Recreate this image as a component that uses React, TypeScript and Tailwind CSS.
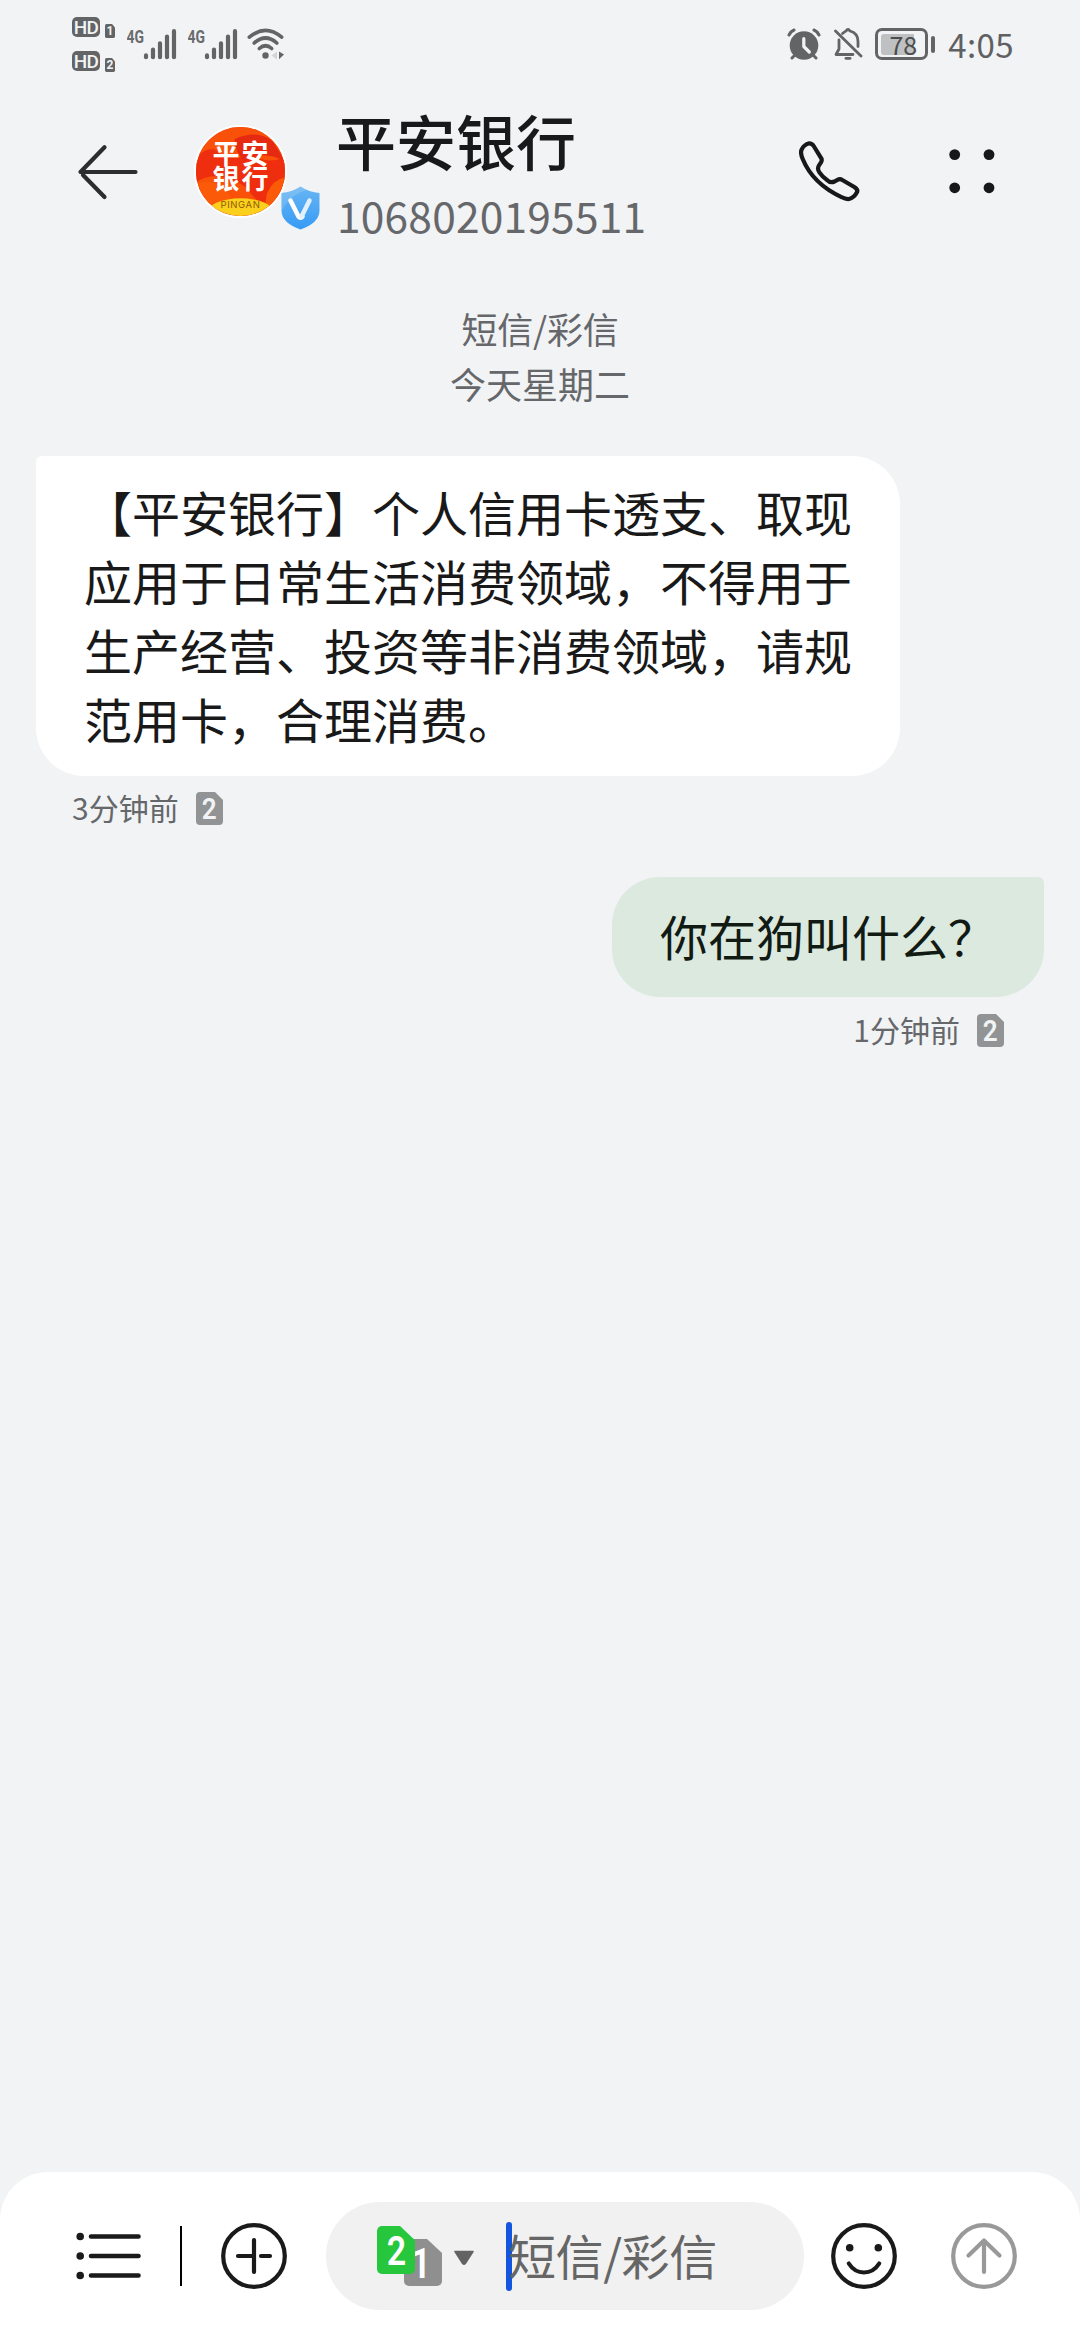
import React from "react";

const cjk = "font-['Noto_Sans_CJK_SC',sans-serif]";

function Sim({ n, className, textClass }: { n: string; className: string; textClass: string }) {
  return (
    <span className={`relative flex shrink-0 items-center justify-center ${className}`}>
      <svg className="absolute inset-0 h-full w-full" viewBox="0 0 38 47" preserveAspectRatio="none">
        <path d="M5 0H23L38 14V42a5 5 0 0 1-5 5H5a5 5 0 0 1-5-5V5a5 5 0 0 1 5-5z" fill="currentColor" />
      </svg>
      <span className={`relative font-['Roboto',sans-serif] leading-none ${textClass}`}>{n}</span>
    </span>
  );
}

function SmallSim({ n, className, textClass }: { n: string; className: string; textClass: string }) {
  return (
    <span className={`relative flex shrink-0 items-center justify-center ${className}`}>
      <svg className="absolute inset-0 h-full w-full" viewBox="0 0 27 33" preserveAspectRatio="none">
        <path d="M4 0H19L27 8V29a4 4 0 0 1-4 4H4a4 4 0 0 1-4-4V4a4 4 0 0 1 4-4z" fill="currentColor" />
      </svg>
      <span className={`relative font-['Roboto',sans-serif] leading-none ${textClass}`}>{n}</span>
    </span>
  );
}

function Hd({ n }: { n: string }) {
  return (
    <div className="flex h-[20px] items-end gap-[5px]">
      <span className="mb-px flex h-[20px] w-[28px] items-center justify-center rounded-[5px] bg-[#636466] font-['Roboto',sans-serif] text-[19px] leading-none font-medium tracking-[-0.8px] text-[#f1f3f5]">
        HD
      </span>
      <SmallSim n={n} className="h-[14px] w-[10px] text-[#636466]" textClass="text-[12px] font-bold text-[#f1f3f5]" />
    </div>
  );
}

function Signal() {
  return (
    <svg className="h-[32px] w-[50px] shrink-0" viewBox="0 0 50 32">
      <text x="-0.5" y="15" fontFamily="Roboto" fontSize="19" fontWeight="700" fill="#6a6b6d" textLength="17.5" lengthAdjust="spacingAndGlyphs">
        4G
      </text>
      <g stroke="#636466" strokeWidth="4.2" strokeLinecap="round">
        <path d="M19 27.4V29.2M26 21.5V29.2M33 15.3V29.2M40 8.5V29.2M47 3.2V29.2" />
      </g>
    </svg>
  );
}

function Wifi() {
  return (
    <svg className="h-[32px] w-[38px] shrink-0" viewBox="0 0 38 32" fill="none">
      <g stroke="#636466" strokeWidth="3.6" strokeLinecap="round">
        <path d="M2.3 9.2Q18.5-4.500 34.7 9.2" />
        <path d="M7.2 15Q18.5 5 29.8 15" />
        <path d="M12.3 20.5Q18.5 15 24.7 20.5" />
      </g>
      <circle cx="18.5" cy="27.5" r="3.2" fill="#636466" />
      <path d="M30 23.5v8l-5.5-4z" fill="#d3d4d6" />
      <path d="M32 23.5l5 3-5 4.8z" fill="#636466" />
    </svg>
  );
}

function StatusBar() {
  return (
    <div className="flex h-[90px] shrink-0 items-start text-[#636466]">
      <div className="mt-[18px] ml-[72px] flex flex-col gap-[14px]">
        <Hd n="1" />
        <Hd n="2" />
      </div>
      <div className="mt-[28px] ml-[12px] flex gap-[11px]">
        <Signal />
        <Signal />
      </div>
      <div className="mt-[28px] ml-[9px]">
        <Wifi />
      </div>
      <svg className="mt-[28px] ml-auto h-[32px] w-[34px]" viewBox="0 0 34 32" fill="none">
        <circle cx="17" cy="17.5" r="14.3" fill="#636466" />
        <g stroke="#636466" strokeWidth="3" strokeLinecap="round">
          <path d="M2 7q2-3.800 5-5M32 7q-2-3.800-5-5M5 30l4-4M29 30l-4-4" />
        </g>
        <path d="M16.8 10.5v8l5.5 5.5" stroke="#f1f3f5" strokeWidth="3.2" strokeLinecap="round" strokeLinejoin="round" />
      </svg>
      <svg className="mt-[28px] ml-[13px] h-[32px] w-[29px]" viewBox="0 0 29 32" fill="none" stroke="#636466" strokeWidth="2.8" strokeLinecap="round">
        <path d="M1.5 3L27 28" />
        <path d="M5 12v9l-3 5.500H19" strokeLinejoin="round" />
        <path d="M8.500 5.500Q11 3.300 12 3q2-3 4 0 8 2 8 10.500v5" />
        <path d="M12 30.300h4" />
      </svg>
      <div className="mt-[28px] ml-[12px] flex items-center gap-[3px]">
        <div className="flex h-[32px] w-[53px] items-center rounded-[7px] border-[3px] border-[#636466] px-[3px]">
          <div className="relative flex h-[21px] w-[41px] items-center justify-center rounded-[3px] bg-[linear-gradient(90deg,#bfc0c1_80%,transparent_80%)] pl-[3px] font-['Noto_Sans_CJK_SC',sans-serif] text-[25px] leading-none text-[#4c4d4e]">
            78
          </div>
        </div>
        <div className="h-[17px] w-[4px] rounded-[2px] bg-[#636466]" />
      </div>
      <div className={`mt-[20px] mr-[66px] ml-[13px] text-[33px] leading-[48px] tracking-[0.4px] text-[#5f6062] ${cjk}`}>4:05</div>
    </div>
  );
}

function Avatar() {
  return (
    <div className="relative h-[93px] w-[93px]">
      <div className="relative flex h-full w-full flex-col items-center overflow-hidden rounded-full border-[2.5px] border-white bg-[#ec3a0c]">
        <svg className="absolute inset-0 h-full w-full" viewBox="0 0 88 88">
          <rect width="88" height="88" fill="#f9500a" />
          <path d="M0 55Q-4 20 18 22 38 38 52 25 68 38 88 30V70Q70 90 50 60 20 40 0 55z" fill="#ee2e0e" />
          <path d="M38 12Q60 2 76 14L88 34Q66 22 48 34 38 24 38 12z" fill="#e62a12" />
          <path d="M0 56Q25 48 38 76H0zM70 66Q76 52 88 50V80H68z" fill="#fb5a08" />
          <ellipse cx="44" cy="85" rx="33" ry="14.5" fill="#fbd01c" />
        </svg>
        <div className={`relative mt-[13px] text-center text-[27px] leading-[25px] font-bold tracking-[2px] text-white ${cjk}`}>
          <div className="-mr-[2px]">平安</div>
          <div className="-mr-[2px]">银行</div>
        </div>
        <div className="relative mt-[10px] font-['Inter',sans-serif] text-[9.5px] leading-[10px] tracking-[0.6px] text-[#8f5a08]">PINGAN</div>
      </div>
      <svg className="absolute top-[61px] left-[87px] h-[44px] w-[39px]" viewBox="0 0 39 44">
        <defs>
          <linearGradient id="shield" x1="0" y1="0" x2="0" y2="1">
            <stop offset="0" stopColor="#68b5f3" />
            <stop offset="1" stopColor="#369bf6" />
          </linearGradient>
        </defs>
        <path d="M19.5 0.5Q28 6 38.5 7V25Q38 37 19.5 43.5 1 37 .5 25V7Q11 6 19.5 .5z" fill="url(#shield)" />
        <path d="M19.5 .5Q11 6 .5 7V25Q10 8 26 4z" fill="#fff" opacity=".15" />
        <path d="M9.5 14.5L17.5 30.5Q19.5 33 21.5 30.5" stroke="#fff" strokeWidth="4.5" fill="none" strokeLinecap="round" />
        <path d="M20.5 30.5L28.5 14.5" stroke="#e1f0fd" strokeWidth="4.5" fill="none" strokeLinecap="round" />
      </svg>
    </div>
  );
}

function Header() {
  return (
    <header className="flex h-[180px] shrink-0 items-start">
      <svg className="mt-[54px] ml-[77px] h-[56px] w-[62px]" viewBox="0 0 62 56" fill="none" stroke="#2c2d2f" strokeWidth="4.2" strokeLinecap="round" strokeLinejoin="round">
        <path d="M58.5 28H3.5L27.5 3.2M6 31L27.500 53" />
      </svg>
      <div className="mt-[35px] ml-[55px]">
        <Avatar />
      </div>
      <div className={`ml-[49px] ${cjk}`}>
        <div className="mt-[6px] h-[88px] text-[60px] leading-[88px] font-medium whitespace-nowrap text-[#18191b]">平安银行</div>
        <div className="mt-px ml-px h-[60px] text-[42.5px] leading-[60px] tracking-[0.2px] whitespace-nowrap text-[#66676a]">1068020195511</div>
      </div>
      <svg className="mt-[51px] ml-auto h-[61px] w-[61px]" viewBox="0 0 61 61" fill="none" stroke="#17181a" strokeWidth="4.2" strokeLinejoin="round">
        <path d="M10.3 2.3Q13 2.3 14.7 5L22.3 17.3Q23.3 19.3 22 21.3L20 24.3Q17.8 28 20.6 31.7 23.5 36 28 39 31.5 42.5 35.5 40.5L38.5 38.8Q41 37.5 43.3 39L55.3 46Q59.5 48.7 57.8 51.5 55 56.8 50 58 46.5 58.3 43 56.3 14 43 3.7 18 1.2 12.5 2.5 8.8 5 3.5 10.3 2.3z" />
      </svg>
      <svg className="mt-[59px] mr-[85px] ml-[89px] h-[46px] w-[46px]" viewBox="0 0 46 46" fill="#17181a">
        <circle cx="5.7" cy="5.6" r="5.4" />
        <circle cx="40" cy="5.6" r="5.4" />
        <circle cx="5.7" cy="38.8" r="5.4" />
        <circle cx="40" cy="38.8" r="5.4" />
      </svg>
    </header>
  );
}

function Composer() {
  return (
    <footer className="flex h-[168px] shrink-0 items-start rounded-t-[48px] bg-white pt-[30px]">
      <div className="flex h-[108px] w-full items-center">
        <svg className="ml-[76px] h-[50px] w-[66px] shrink-0" viewBox="0 0 66 50" stroke="#1a1a1a" strokeWidth="4.6" strokeLinecap="round">
          <path d="M15 5.500H62.500M15 25H62.500M15 44.500H62.500" />
          <path d="M4.200 5.500h.01M4.200 25h.01M4.200 44.500h.01" strokeWidth="7.6" />
        </svg>
        <div className="ml-[38px] h-[60px] w-[2px] shrink-0 bg-black" />
        <svg className="ml-[39px] h-[66px] w-[66px] shrink-0" viewBox="0 0 66 66" fill="none" stroke="#1a1a1a" strokeWidth="4.2" strokeLinecap="round">
          <circle cx="33" cy="33" r="30.8" />
          <path d="M33 17V49M17 33H31M40 33H49" />
        </svg>
        <div className="ml-[39px] flex h-[108px] w-[478px] shrink-0 items-center rounded-full bg-[#f1f1f1]">
          <div className="ml-[51px] flex h-[60px] w-[66px]">
            <Sim n="2" className="z-10 h-[48px] w-[38px] text-[#27c73d]" textClass="mt-[3px] text-[40px] font-semibold text-white scale-x-[.85]" />
            <Sim n="1" className="mt-[13px] -ml-[11px] h-[47px] w-[38px] text-[#8f8f8f]" textClass="mt-[3px] -ml-[4px] text-[42px] font-semibold text-white scale-x-[.85]" />
          </div>
          <svg className="mt-[3px] ml-[10px] h-[16px] w-[22px]" viewBox="0 0 22 16">
            <path d="M2 1.500H20L12.300 13.500Q11 15 9.700 13.500z" fill="#636363" stroke="#636363" strokeWidth="1.5" strokeLinejoin="round" />
          </svg>
          <div className="relative ml-[31px] flex h-[68px] items-center">
            <span className="absolute top-0 left-0 h-[69px] w-[6px] rounded-full bg-[#1455e0]" />
            <span className={`relative -top-[2px] ml-[2px] text-[48px] leading-[68px] tracking-[-0.4px] whitespace-nowrap text-[#666666] ${cjk}`}>短信/彩信</span>
          </div>
        </div>
        <svg className="ml-[27px] h-[66px] w-[66px] shrink-0" viewBox="0 0 66 66" fill="none" stroke="#1a1a1a" strokeWidth="4.2" strokeLinecap="round">
          <circle cx="33" cy="33" r="30.8" />
          <circle cx="18.7" cy="24.7" r="3.8" fill="#1a1a1a" stroke="none" />
          <circle cx="47.3" cy="24.7" r="3.8" fill="#1a1a1a" stroke="none" />
          <path d="M17.800 40.500Q23.500 49.500 33 49.500T48.200 40.500" />
        </svg>
        <svg className="ml-[54px] h-[66px] w-[66px] shrink-0" viewBox="0 0 66 66" fill="none" stroke="#999999" strokeWidth="4.2" strokeLinecap="round" strokeLinejoin="round">
          <circle cx="33" cy="33" r="30.8" />
          <path d="M33 17.500V49M17.500 32.500L33 17.500L48.500 32.500" />
        </svg>
      </div>
    </footer>
  );
}

function Stamp({ text }: { text: string }) {
  return (
    <div className="flex h-[34px] items-center gap-[17px]">
      <span className="-mt-[2px] text-[30px] leading-[34px] whitespace-nowrap text-[#66676a]">{text}</span>
      <SmallSim n="2" className="h-[33px] w-[27px] text-[#929395]" textClass="mt-[2px] text-[29px] font-semibold text-[#f1f3f5] scale-x-[.9]" />
    </div>
  );
}

export default function App() {
  return (
    <div className={`flex h-[2340px] w-[1080px] flex-col overflow-hidden bg-[#f1f3f5] ${cjk}`}>
      <StatusBar />
      <Header />
      <main className="flex min-h-0 flex-1 flex-col">
        <div className="mt-[31px] text-center text-[36px] leading-[55px] text-[#66676a]">
          <div className="tracking-[-0.2px]">短信/彩信</div>
          <div>今天星期二</div>
        </div>
        <div className="mt-[45px] ml-[36px] w-[864px] rounded-[48px] rounded-tl-[6px] bg-white px-[48px] pt-[21px] pb-[23px] text-[48px] leading-[69px] text-[#191919]">
          <div className="whitespace-nowrap">【平安银行】个人信用卡透支、取现</div>
          <div className="whitespace-nowrap">应用于日常生活消费领域，不得用于</div>
          <div className="whitespace-nowrap">生产经营、投资等非消费领域，请规</div>
          <div className="whitespace-nowrap">范用卡，合理消费。</div>
        </div>
        <div className="mt-[15px] ml-[72px]">
          <Stamp text="3分钟前" />
        </div>
        <div className="mt-[52px] mr-[36px] h-[120px] w-[432px] self-end rounded-[48px] rounded-tr-[6px] bg-[#dce9de] px-[48px] pt-[23px] text-[48px] leading-[70px] text-[#121a14]">
          你在狗叫什么？
        </div>
        <div className="mt-[16px] mr-[76px] self-end">
          <Stamp text="1分钟前" />
        </div>
      </main>
      <Composer />
    </div>
  );
}
